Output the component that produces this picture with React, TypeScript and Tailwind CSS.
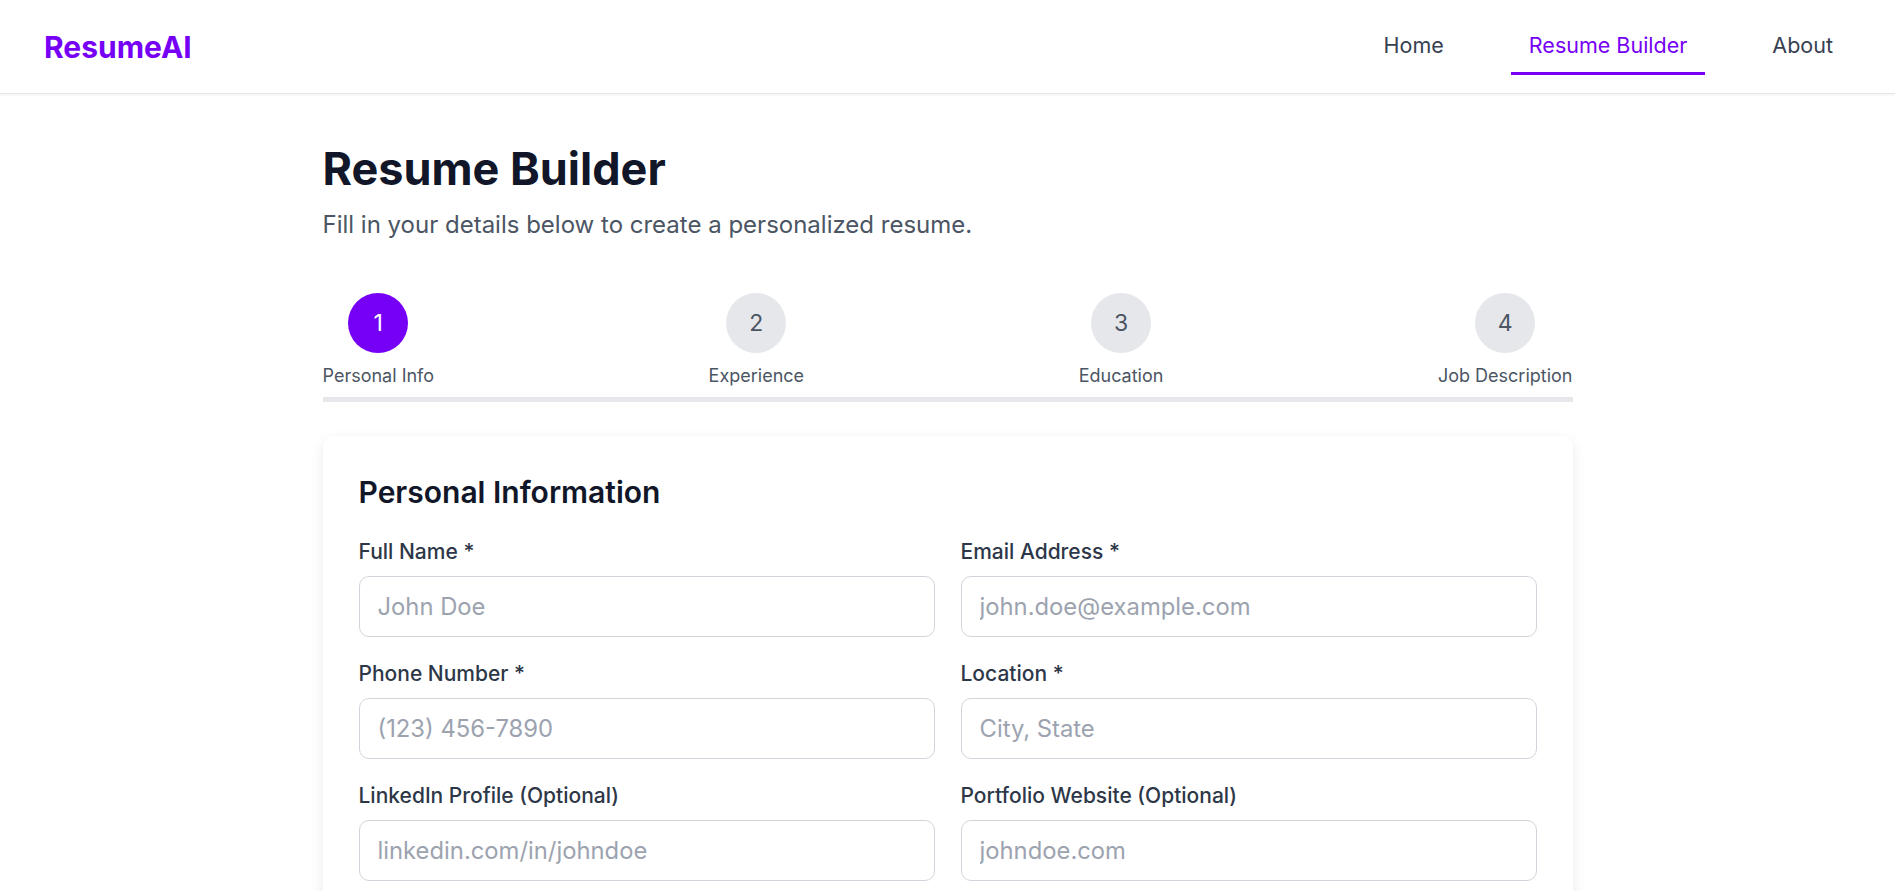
import React from "react"

const steps = [
  { n: 1, label: "Personal Info", active: true },
  { n: 2, label: "Experience", active: false },
  { n: 3, label: "Education", active: false },
  { n: 4, label: "Job Description", active: false },
]

const fields = [
  { label: "Full Name *", placeholder: "John Doe" },
  { label: "Email Address *", placeholder: "john.doe@example.com" },
  { label: "Phone Number *", placeholder: "(123) 456-7890" },
  { label: "Location *", placeholder: "City, State" },
  { label: "LinkedIn Profile (Optional)", placeholder: "linkedin.com/in/johndoe" },
  { label: "Portfolio Website (Optional)", placeholder: "johndoe.com" },
]

function Header() {
  return (
    <header className="flex h-[94px] items-center justify-between border-b border-[#e5e7eb] bg-white px-[44px] shadow-[0_1px_3px_rgba(0,0,0,0.06)]">
      <a href="#" className="text-[30px] font-bold leading-none text-[#7600f5]">
        ResumeAI
      </a>
      <nav className="flex items-center gap-[49px]">
        <a href="#" className="border-b-[3px] border-transparent px-[18px] pb-[12px] pt-[12px] text-[21.5px] leading-[30px] text-[#374151]">
          Home
        </a>
        <a href="#" className="border-b-[3px] border-[#7600f5] px-[18px] pb-[12px] pt-[12px] text-[21.5px] leading-[30px] text-[#7600f5]">
          Resume Builder
        </a>
        <a href="#" className="border-b-[3px] border-transparent px-[18px] pb-[12px] pt-[12px] text-[21.5px] leading-[30px] text-[#374151]">
          About
        </a>
      </nav>
    </header>
  )
}

function Stepper() {
  return (
    <div className="mt-[51px]">
      <div className="flex justify-between">
        {steps.map((s) => (
          <div key={s.n} className="flex flex-col items-center">
            <div
              className={
                s.active
                  ? "flex h-[60px] w-[60px] items-center justify-center rounded-full bg-[#7600f5] text-[23px] text-white"
                  : "flex h-[60px] w-[60px] items-center justify-center rounded-full bg-[#e5e7eb] text-[23px] text-[#4b5563]"
              }
            >
              {s.n}
            </div>
            <span className="mt-[10px] text-[18px] leading-[25px] text-[#4b5563]">{s.label}</span>
          </div>
        ))}
      </div>
      <div className="mt-[9px] h-[5px] w-full bg-[#e5e7eb]" />
    </div>
  )
}

export default function App() {
  return (
    <div className="min-h-screen bg-white font-['Inter',sans-serif]">
      <Header />
      <main className="mx-auto w-[1250px] pb-16 pt-[50px]">
        <h1 className="text-[45px] font-bold leading-[50px] text-[#121629]">Resume Builder</h1>
        <p className="mt-[13px] text-[24px] leading-[35px] text-[#4b5563]">
          Fill in your details below to create a personalized resume.
        </p>

        <Stepper />

        <section className="mt-[34px] rounded-[10px] bg-white p-[36px] shadow-[0_4px_14px_rgba(0,0,0,0.08)]">
          <h2 className="mb-[25px] text-[30px] font-semibold leading-[40px] text-[#121629]">Personal Information</h2>
          <div className="grid grid-cols-2 gap-x-[26px] gap-y-[22px]">
            {fields.map((f) => (
              <div key={f.label} className="flex flex-col">
                <label className="mb-[9px] text-[21px] font-medium leading-[30px] text-[#2d3748]">{f.label}</label>
                <input
                  type="text"
                  placeholder={f.placeholder}
                  className="h-[61px] w-full rounded-[10px] border border-[#d1d5db] px-[18px] text-[23.8px] text-[#111827] outline-none placeholder:text-[#9ca3af]"
                />
              </div>
            ))}
          </div>
          <div className="h-[200px]" />
        </section>
      </main>
    </div>
  )
}
